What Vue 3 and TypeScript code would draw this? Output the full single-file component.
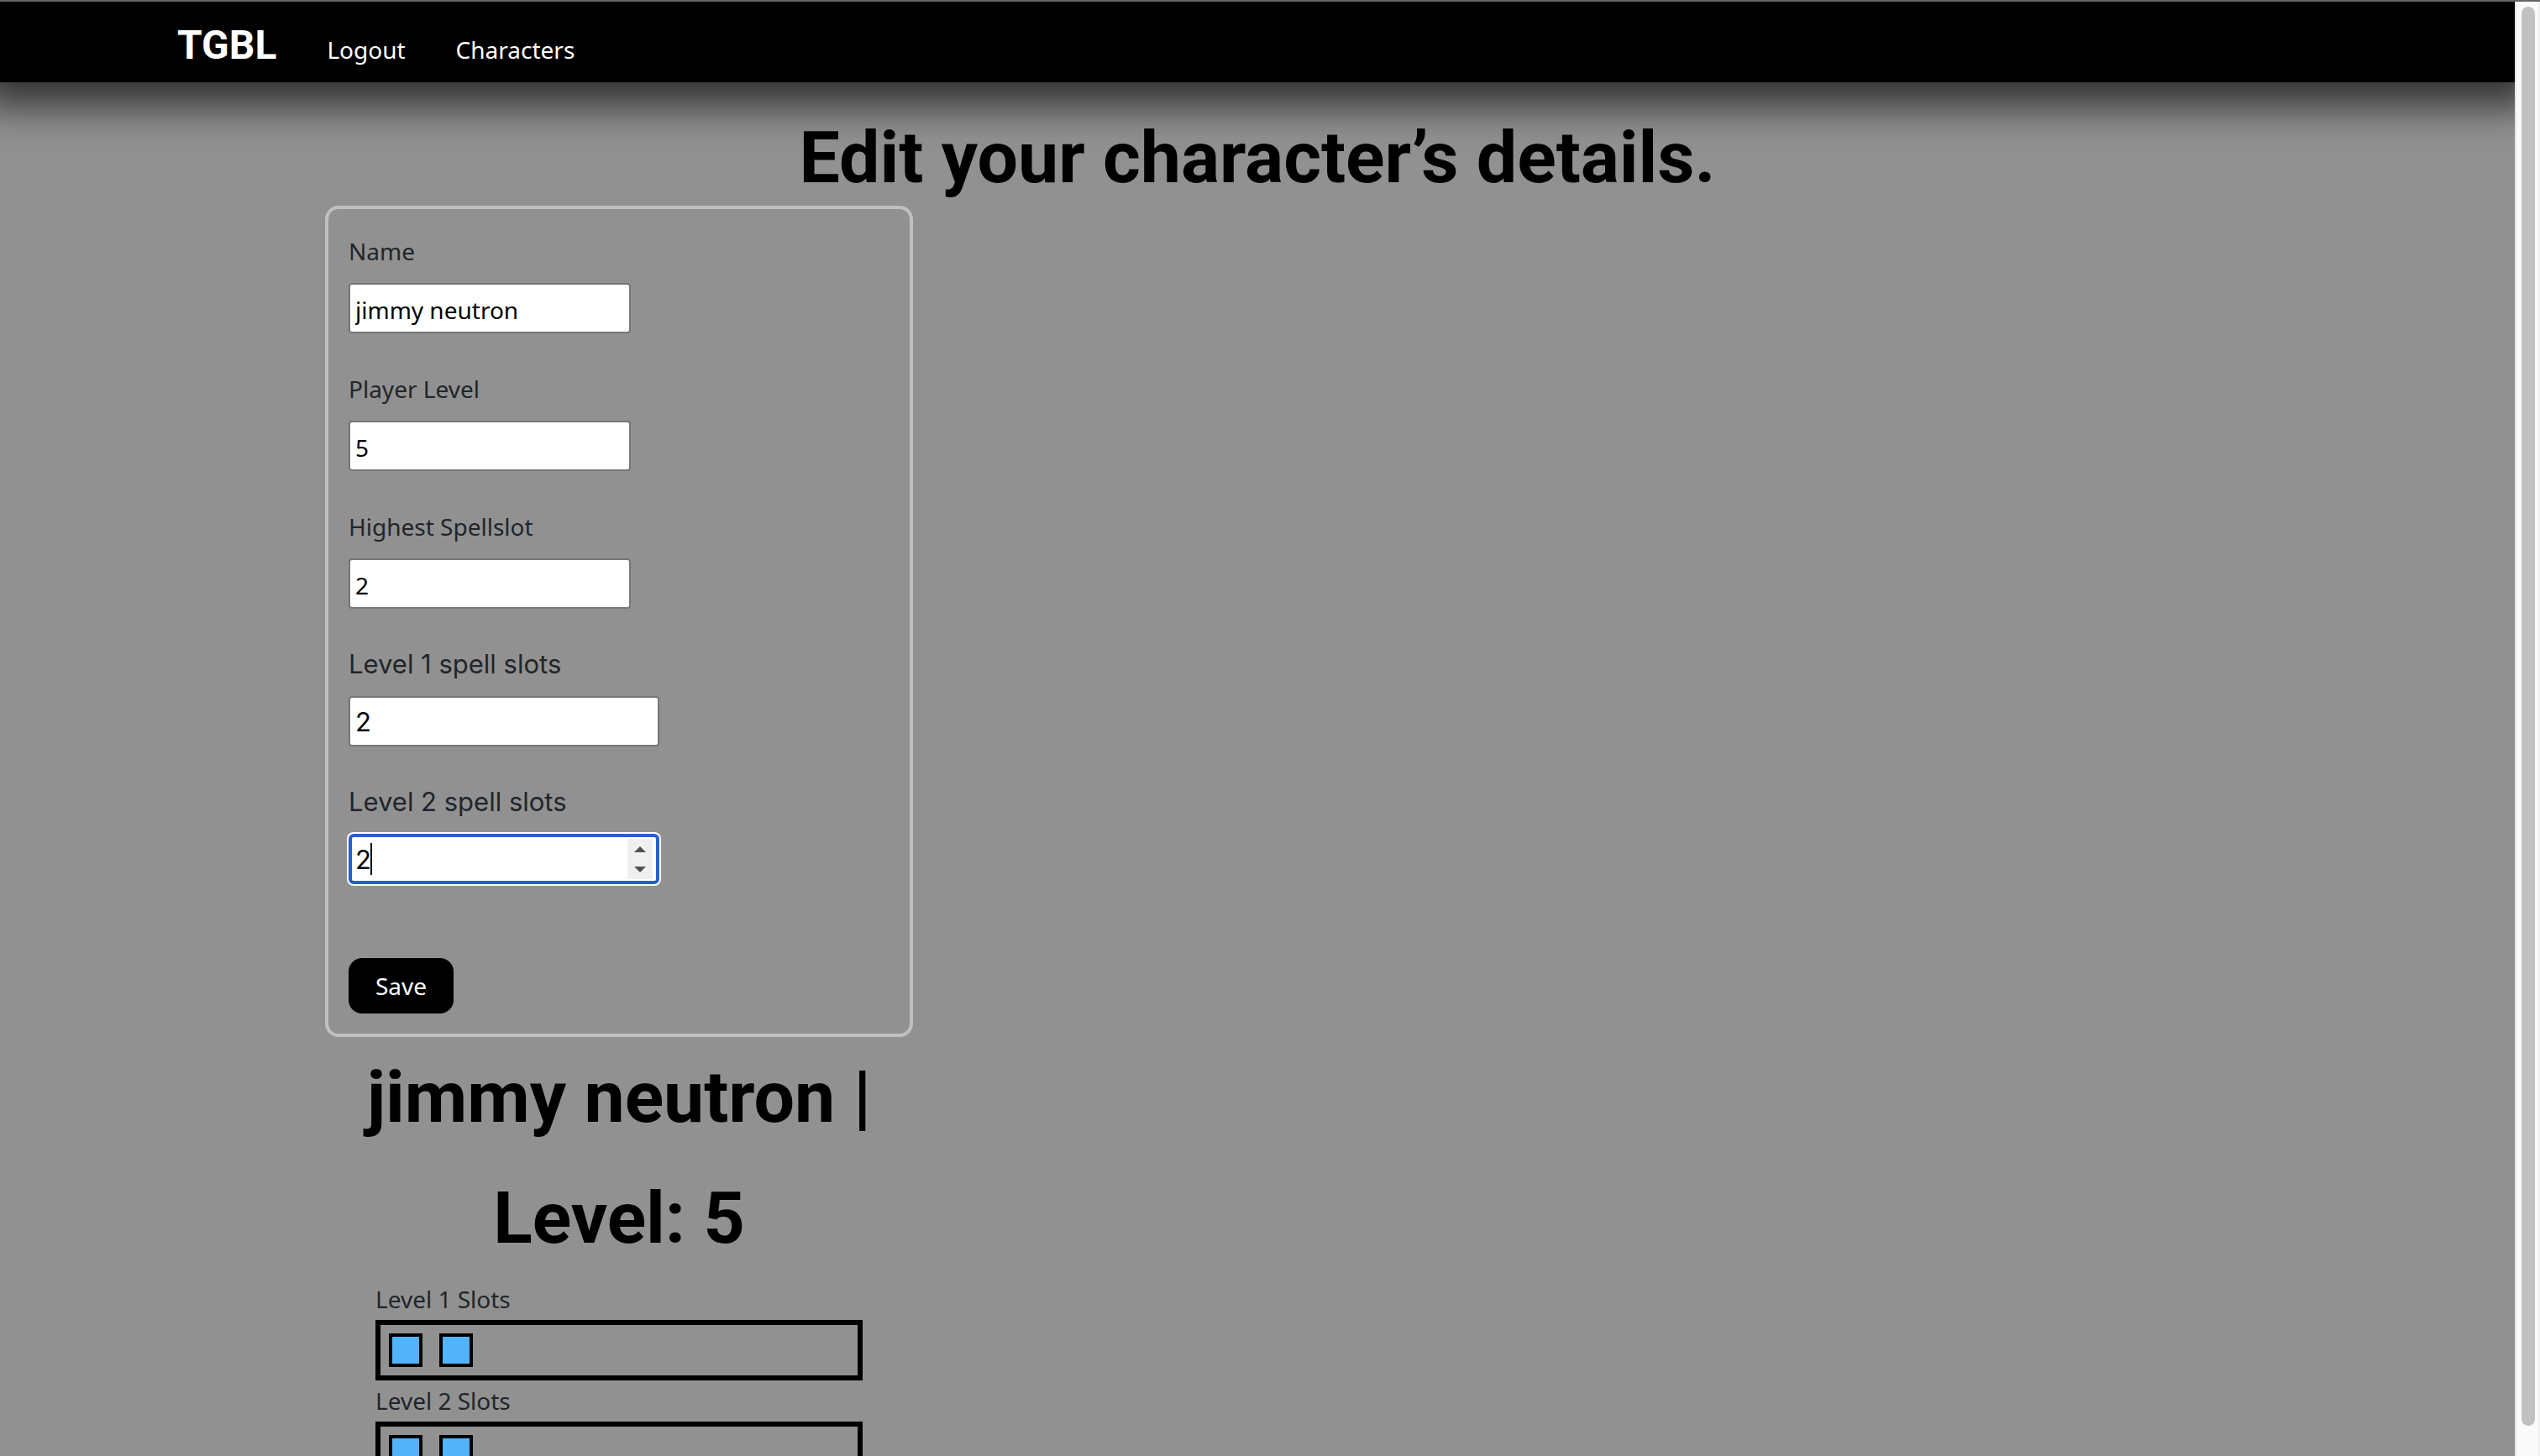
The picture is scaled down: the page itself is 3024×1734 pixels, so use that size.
<script setup lang="ts">
import { computed, ref } from 'vue'

interface SpellLevel {
  level: number
  slots: number
}

const name = ref('jimmy neutron')
const playerLevel = ref(5)
const highestSlot = ref(2)
const spellLevels = ref<SpellLevel[]>([
  { level: 1, slots: 2 },
  { level: 2, slots: 2 },
])
const activeLevel = ref(2)

// The divider stays on the same line as the name.
const summary = computed(() => `${name.value}\u00a0| Level: ${playerLevel.value}`)
</script>

<template>
  <div class="screen">
    <div class="page">
      <header class="navbar">
        <nav class="nav-inner">
          <a class="brand" href="#">TGBL</a>
          <a class="nav-link" href="#logout">Logout</a>
          <a class="nav-link" href="#characters">Characters</a>
        </nav>
      </header>

      <main class="content">
        <h1 class="title">Edit your character’s details.</h1>

        <div class="column">
          <form class="card" @submit.prevent>
            <div class="field">
              <label for="name">Name</label>
              <input id="name" v-model="name" type="text" />
            </div>
            <div class="field">
              <label for="player-level">Player Level</label>
              <input id="player-level" v-model="playerLevel" type="number" />
            </div>
            <div class="field">
              <label for="highest-slot">Highest Spellslot</label>
              <input id="highest-slot" v-model="highestSlot" type="number" />
            </div>
            <div v-for="s in spellLevels" :key="s.level" class="field spell">
              <label :for="`slots-${s.level}`">Level {{ s.level }} spell slots</label>
              <div class="number-box" :class="{ active: s.level === activeLevel }">
                <input :id="`slots-${s.level}`" v-model="s.slots" type="number" />
                <template v-if="s.level === activeLevel">
                  <span class="caret"></span>
                  <div class="spinner">
                    <button type="button" aria-label="Increase" @click="s.slots++">
                      <svg viewBox="0 0 14 7"><path d="M0 7L7 0L14 7Z" /></svg>
                    </button>
                    <button type="button" aria-label="Decrease" @click="s.slots--">
                      <svg viewBox="0 0 14 7"><path d="M0 0L7 7L14 0Z" /></svg>
                    </button>
                  </div>
                </template>
              </div>
            </div>
            <button class="save" type="submit">Save</button>
          </form>

          <section class="sheet">
            <h2 class="title summary">{{ summary }}</h2>
            <div v-for="s in spellLevels" :key="s.level" class="slot-row">
              <p>Level {{ s.level }} Slots</p>
              <div class="slots">
                <span v-for="n in Number(s.slots)" :key="n" class="slot"></span>
              </div>
            </div>
          </section>
        </div>
      </main>
    </div>
    <div class="scrollbar" aria-hidden="true">
      <div class="thumb"></div>
    </div>
  </div>
</template>

<style>
body {
  background: #919191;
  overflow: hidden;
}
</style>

<style scoped>
.screen {
  display: flex;
  box-sizing: border-box;
  height: 100vh;
  border-top: 2px solid #666;
  font-family: 'Noto Sans', 'Open Sans', sans-serif;
  font-size: 28px;
  line-height: 48px;
  color: #212529;
}

.page {
  flex: 1;
  min-width: 0;
  overflow: hidden;
  background: #919191;
}

.scrollbar {
  box-sizing: border-box;
  width: 30px;
  padding: 6px 4px 36px 6px;
  border-left: 2px solid #e6e6e6;
  border-right: 2px solid #eee;
  background: #fafafa;
}

.thumb {
  height: 100%;
  border-radius: 8px;
  background: #c1c1c1;
}

.navbar {
  position: relative;
  background: #000;
  box-shadow: 0 4px 44px 24px rgba(0, 0, 0, 0.66);
}

.nav-inner {
  display: flex;
  align-items: baseline;
  gap: 60px;
  box-sizing: border-box;
  max-width: 2640px;
  height: 96px;
  margin: 0 auto;
  padding: 24px 34px 0;
}

.nav-inner a {
  color: #fff;
  text-decoration: none;
}

.brand {
  font: 700 48px/56px Roboto, sans-serif;
}

.content {
  max-width: 2220px;
  margin: 0 auto;
  padding-top: 32px;
}

.title {
  margin: 0;
  font: 700 86px/115px Roboto, sans-serif;
  color: #000;
  text-align: center;
}

.summary {
  line-height: 144px;
}

.column {
  width: 700px;
  max-width: 100%;
}

.card {
  box-sizing: border-box;
  padding: 26px 24px 24px;
  border: 4px solid #c0c0c0;
  border-radius: 16px;
}

.field {
  display: flex;
  flex-direction: column;
  align-items: flex-start;
  gap: 14px;
  margin-bottom: 42px;
}

.field input {
  box-sizing: border-box;
  width: 336px;
  height: 60px;
  padding: 6px 6px 2px;
  border: 2px solid #767676;
  border-radius: 4px;
  outline: 0;
  background: #fff;
  font: inherit;
  color: #000;
  appearance: textfield;
}

.field input::-webkit-inner-spin-button {
  appearance: none;
}

.spell {
  font-family: Inter, sans-serif;
  font-size: 31px;
}

.number-box {
  position: relative;
}

.field .number-box input {
  display: block;
  width: 370px;
  padding: 4px 6px;
}

.field .active input {
  padding: 2px 4px;
  border: 4px solid #2860c8;
  border-radius: 6px;
  box-shadow: 0 0 0 2px #fff;
}

.caret {
  position: absolute;
  top: 11px;
  left: 26px;
  width: 2px;
  height: 38px;
  background: #000;
}

.spinner {
  position: absolute;
  top: 6px;
  right: 8px;
  display: flex;
  flex-direction: column;
  width: 30px;
  height: 48px;
  background: #f0f0f0;
}

.spinner button {
  display: flex;
  flex: 1;
  align-items: center;
  justify-content: center;
  padding: 0;
  border: 0;
  background: none;
}

.spinner svg {
  width: 14px;
  height: 7px;
  fill: #505050;
}

.save {
  display: block;
  height: 66px;
  margin-top: 88px;
  padding: 0 32px;
  border: 0;
  border-radius: 16px;
  background: #000;
  font: inherit;
  color: #fff;
}

.slot-row {
  padding: 0 60px;
}

.slot-row p {
  margin: 0;
  line-height: 49px;
}

.slots {
  display: flex;
  gap: 20px;
  box-sizing: border-box;
  height: 72px;
  padding: 10px;
  border: 6px solid #000;
}

.slot {
  box-sizing: border-box;
  width: 40px;
  height: 40px;
  border: 4px solid #000;
  background: #52b3f9;
}
</style>
